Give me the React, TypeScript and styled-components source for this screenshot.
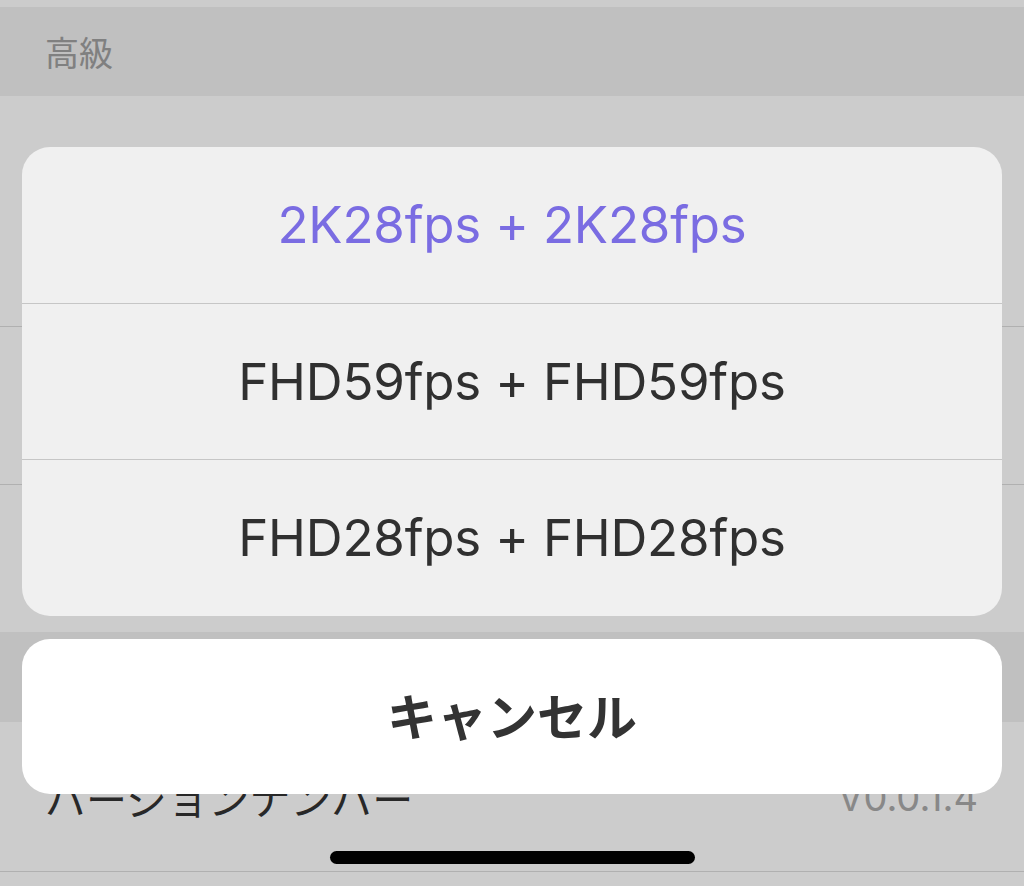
import React from "react";
import styled, { createGlobalStyle } from "styled-components";

const Global = createGlobalStyle`
  html, body {
    margin: 0;
    padding: 0;
    overflow: hidden;
  }
  body {
    font-family: Inter, "Noto Sans CJK JP", sans-serif;
  }
`;

const Screen = styled.div`
  position: relative;
  width: 1024px;
  height: 886px;
  overflow: hidden;
  background: #ffffff;
`;

const Settings = styled.div`
  display: flex;
  flex-direction: column;
`;

const SectionHeader = styled.div<{ h: number }>`
  height: ${p => p.h}px;
  background: #f0f0f0;
  display: flex;
  align-items: center;
  padding-left: 45px;
  font-family: "Noto Sans CJK JP", sans-serif;
  font-size: 34px;
  color: #a0a0a0;
`;

const Row = styled.div<{ h: number; noLine?: boolean }>`
  height: ${p => p.h}px;
  display: flex;
  align-items: center;
  justify-content: space-between;
  padding: 0 46px 0 45px;
  background: #ffffff;
  box-sizing: border-box;
  border-bottom: ${p => (p.noLine ? "none" : "1.5px solid #dcdcdc")};
`;

const RowLabel = styled.span`
  font-family: "Noto Sans CJK JP", sans-serif;
  font-size: 41px;
  color: #333333;
`;

const RowValue = styled.span`
  font-family: Inter, sans-serif;
  font-size: 38px;
  color: #aaaaaa;
`;

const Backdrop = styled.div`
  position: absolute;
  inset: 0;
  background: rgba(0, 0, 0, 0.2);
`;

const Sheet = styled.div`
  position: absolute;
  left: 22px;
  right: 22px;
  top: 147px;
  display: flex;
  flex-direction: column;
  gap: 23px;
`;

const Group = styled.div`
  background: #f0f0f0;
  border-radius: 28px;
  overflow: hidden;
  display: flex;
  flex-direction: column;
`;

const Option = styled.div<{ active?: boolean }>`
  height: 155.5px;
  display: flex;
  align-items: center;
  justify-content: center;
  font-family: Inter, sans-serif;
  font-size: 51px;
  letter-spacing: -0.2px;
  color: ${p => (p.active ? "#7a6ce2" : "#303030")};
  & + & {
    border-top: 1.5px solid #c6c6c6;
  }
`;

const Cancel = styled.div`
  height: 155px;
  background: #ffffff;
  border-radius: 28px;
  display: flex;
  align-items: center;
  justify-content: center;
  padding-bottom: 4px;
  box-sizing: border-box;
  font-family: "Noto Sans CJK JP", sans-serif;
  font-weight: 700;
  font-size: 50px;
  color: #333333;
`;

const HomeBar = styled.div`
  position: absolute;
  left: 330px;
  top: 851px;
  width: 365px;
  height: 13px;
  border-radius: 7px;
  background: #000000;
`;

const options = ["2K28fps + 2K28fps", "FHD59fps + FHD59fps", "FHD28fps + FHD28fps"];

export default function App() {
  return (
    <Screen>
      <Global />
      <Settings>
        <Row h={7} noLine />
        <SectionHeader h={89}>高級</SectionHeader>
        <Row h={231} />
        <Row h={158} />
        <Row h={147} noLine />
        <SectionHeader h={90} />
        <Row h={150}>
          <RowLabel>バージョンナンバー</RowLabel>
          <RowValue>V0.0.1.4</RowValue>
        </Row>
        <Row h={60} noLine />
      </Settings>
      <Backdrop />
      <Sheet>
        <Group>
          {options.map((o, i) => (
            <Option key={o} active={i === 0}>
              {o}
            </Option>
          ))}
        </Group>
        <Cancel>キャンセル</Cancel>
      </Sheet>
      <HomeBar />
    </Screen>
  );
}
